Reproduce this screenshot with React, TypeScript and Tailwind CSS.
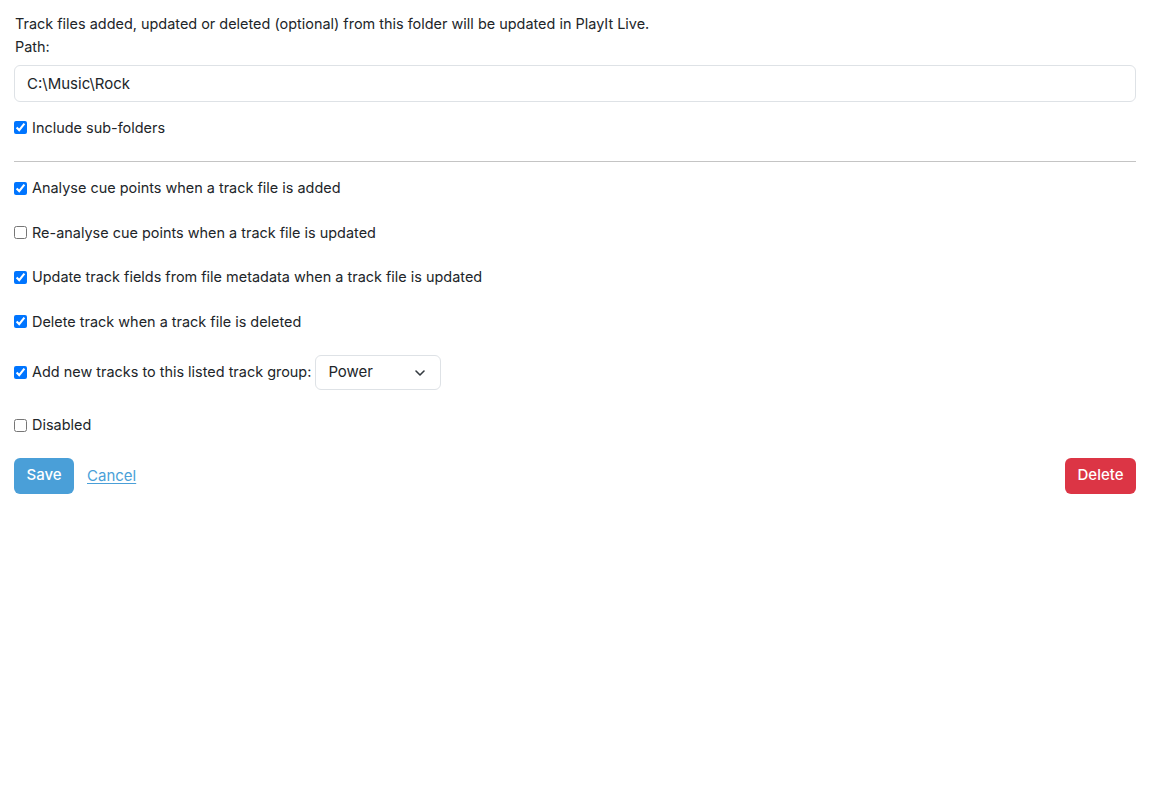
import React from 'react';

const options = [
  { label: 'Analyse cue points when a track file is added', checked: true },
  { label: 'Re-analyse cue points when a track file is updated', checked: false },
  { label: 'Update track fields from file metadata when a track file is updated', checked: true },
  { label: 'Delete track when a track file is deleted', checked: true },
];

function Check({ checked, label }: { checked: boolean; label: string }) {
  return (
    <label className="flex items-center gap-[5px] h-[22.5px]">
      <input type="checkbox" defaultChecked={checked} className="m-0 w-[13px] h-[13px]" />
      <span>{label}</span>
    </label>
  );
}

export default function App() {
  return (
    <div
      className="min-h-[800px] bg-white px-[14px] pt-[13px] text-[14.45px] leading-[22.5px] text-[#212529]"
      style={{ fontFamily: 'Inter, "Noto Sans", sans-serif' }}
    >
      <div className="w-[1122px]">
        <p className="pl-[1px]">Track files added, updated or deleted (optional) from this folder will be updated in PlayIt Live.</p>
        <p className="pl-[1px]">Path:</p>
        <input
          type="text"
          defaultValue="C:\Music\Rock"
          className="mt-[7px] block w-full h-[36.5px] rounded-[6px] border border-[#dee2e6] px-[12px] text-[15px] text-[#212529] outline-none"
        />

        <div className="mt-[15px]">
          <Check checked label="Include sub-folders" />
        </div>

        <hr className="mt-[22px] mb-[15px] border-0 border-t border-[#c4c4c4]" />

        <div className="flex flex-col gap-[22px]">
          {options.map((o) => (
            <Check key={o.label} checked={o.checked} label={o.label} />
          ))}

          <label className="flex items-center gap-[5px]">
            <input type="checkbox" defaultChecked className="m-0 w-[13px] h-[13px]" />
            <span>Add new tracks to this listed track group:</span>
            <span className="relative ml-[-1px] flex items-center w-[126px] h-[35px] rounded-[6px] border border-[#dee2e6] pl-[12px] text-[15px]">
              Power
              <svg
                width="16"
                height="16"
                viewBox="0 0 16 16"
                fill="none"
                stroke="#343a40"
                strokeWidth="1.6"
                strokeLinecap="round"
                strokeLinejoin="round"
                className="absolute right-[12px] top-[9px]"
              >
                <path d="M4 6l4 4 4-4" />
              </svg>
            </span>
          </label>

          <div className="pt-[2px]">
            <Check checked={false} label="Disabled" />
          </div>
        </div>

        <div className="mt-[21px] flex items-center justify-between">
          <div className="flex items-center gap-[13px]">
            <button className="h-[36px] w-[60px] rounded-[6px] bg-[#4a9fd8] text-[15px] font-medium text-white">Save</button>
            <a href="#" className="pt-[1px] text-[15px] text-[#4a9fd8] underline underline-offset-[2px]">Cancel</a>
          </div>
          <button className="h-[36px] w-[71px] rounded-[6px] bg-[#dc3545] text-[15px] font-medium text-white">Delete</button>
        </div>
      </div>
    </div>
  );
}
